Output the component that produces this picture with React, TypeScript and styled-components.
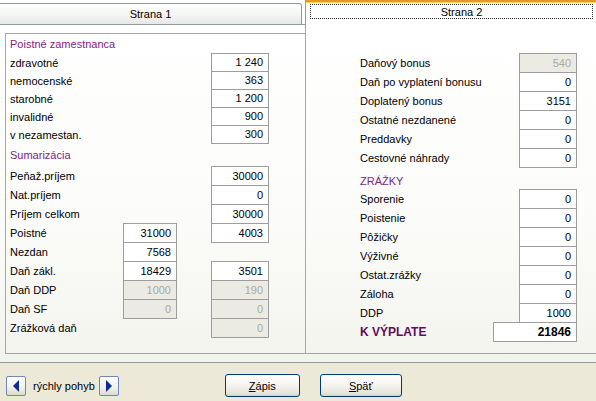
import React from 'react';
import styled, { createGlobalStyle } from 'styled-components';

const GlobalStyle = createGlobalStyle`
  html, body {
    margin: 0;
    padding: 0;
  }
  body {
    background: #ece9d8;
    font-family: "Liberation Sans", Arial, sans-serif;
    font-size: 11px;
    color: #000000;
  }
`;

const Window = styled.div`
  width: 596px;
  height: 401px;
  display: flex;
  flex-direction: column;
  overflow: hidden;
  background: #ece9d8;
`;

const TabStrip = styled.div`
  display: flex;
  align-items: flex-end;
  height: 25px;
  flex-shrink: 0;
  background: #ffffff;
`;

const InactiveTab = styled.div`
  box-sizing: border-box;
  width: 302px;
  height: 22px;
  border: 1px solid #919b9c;
  border-left: none;
  border-top-right-radius: 3px;
  background: linear-gradient(to bottom, #ffffff, #f5f5f3 55%, #e7e7ea);
  display: flex;
  align-items: center;
  justify-content: center;
`;

const TabGap = styled.div`
  width: 3px;
  height: 25px;
  box-sizing: border-box;
  border-bottom: 1px solid #919b9c;
`;

const ActiveTab = styled.div`
  box-sizing: border-box;
  flex: 1;
  height: 25px;
  border-left: 1px solid #919b9c;
  border-top: 2px solid #e8962e;
  box-shadow: inset 0 1px 0 #ffce5a;
  background: #ffffff;
  padding: 2px 3px 0 4px;
`;

const FocusRect = styled.div`
  box-sizing: border-box;
  height: 15px;
  border: 1px dotted #333333;
  padding-left: 20px;
  display: flex;
  align-items: center;
  justify-content: center;
`;

const Page = styled.div`
  box-sizing: border-box;
  height: 338px;
  flex-shrink: 0;
  display: flex;
  align-items: flex-start;
  border-bottom: 1px solid #919b9c;
  background: linear-gradient(to bottom, #ffffff, #fbfbf9 60%, #f3f3ee);
`;

const GroupBox = styled.div`
  box-sizing: border-box;
  width: 300px;
  height: 321px;
  margin: 8px 0 0 5px;
  border: 1px solid #a7a6aa;
  border-right: none;
  padding-left: 4px;
`;

const RightPanel = styled.div`
  box-sizing: border-box;
  flex: 1;
  height: 329px;
  border-left: 1px solid #a7a6aa;
  border-bottom: 1px solid #a7a6aa;
  padding: 28px 0 0 54px;
`;

const SectionTitle = styled.div<{ $h: number; $pad?: number }>`
  height: ${(p) => p.$h}px;
  box-sizing: border-box;
  padding-top: ${(p) => p.$pad ?? 0}px;
  display: flex;
  align-items: center;
  color: #7e1f7e;
`;

const LeftRow = styled.div<{ $h: number }>`
  display: grid;
  grid-template-columns: 113px 54px 34px 58px;
  height: ${(p) => p.$h}px;
  align-items: start;
`;

const RightRow = styled.div<{ $h: number; $box: number }>`
  display: grid;
  grid-template-columns: 1fr ${(p) => p.$box}px;
  width: 217px;
  height: ${(p) => p.$h}px;
  align-items: start;
`;

const Label = styled.div<{ $h: number; $strong?: boolean }>`
  height: ${(p) => p.$h + 1}px;
  display: flex;
  align-items: center;
  white-space: nowrap;
  font-weight: ${(p) => (p.$strong ? 700 : 400)};
  color: ${(p) => (p.$strong ? '#5e0d5e' : '#000000')};
  font-size: ${(p) => (p.$strong ? 12 : 11)}px;
`;

const Field = styled.div<{ $h: number; $disabled?: boolean; $strong?: boolean }>`
  box-sizing: border-box;
  height: ${(p) => p.$h + 1}px;
  border: 1px solid #9d9d9d;
  background: ${(p) => (p.$disabled ? '#ebebe4' : '#ffffff')};
  color: ${(p) => (p.$disabled ? '#aaa99f' : '#000000')};
  font-weight: ${(p) => (p.$strong ? 700 : 400)};
  font-size: ${(p) => (p.$strong ? 12 : 11)}px;
  text-align: right;
  padding-right: 5px;
  line-height: ${(p) => p.$h - 1}px;
  position: relative;
`;

const Footer = styled.div`
  flex: 1;
  display: flex;
  align-items: flex-start;
  padding: 13px 0 0 6px;
`;

const ArrowButton = styled.div`
  box-sizing: border-box;
  width: 20px;
  height: 20px;
  border: 1px solid #6f88b4;
  border-radius: 2px;
  background: linear-gradient(to bottom, #ffffff, #f1f0ea 60%, #dcd9cf);
  display: flex;
  align-items: center;
  justify-content: center;
`;

const NavText = styled.span`
  line-height: 20px;
  margin: 0 4px 0 7px;
  white-space: nowrap;
`;

const PushButton = styled.div<{ $w: number; $ml: number }>`
  box-sizing: border-box;
  width: ${(p) => p.$w}px;
  height: 23px;
  margin: -2px 0 0 ${(p) => p.$ml}px;
  border: 1px solid #003c74;
  border-radius: 3px;
  background: linear-gradient(to bottom, #ffffff, #f4f3ee 50%, #e4e2d8 90%, #d6d0c5);
  box-shadow: inset 0 -1px 0 #d8d2c6;
  display: flex;
  align-items: center;
  justify-content: center;
`;

type Cell = { v: string; off?: boolean } | null;
type LRow = [string, Cell, Cell];

const top: LRow[] = [
  ['zdravotné', null, { v: '1 240' }],
  ['nemocenské', null, { v: '363' }],
  ['starobné', null, { v: '1 200' }],
  ['invalidné', null, { v: '900' }],
  ['v nezamestan.', null, { v: '300' }],
];

const summary: LRow[] = [
  ['Peňaž.príjem', null, { v: '30000' }],
  ['Nat.príjem', null, { v: '0' }],
  ['Príjem celkom', null, { v: '30000' }],
  ['Poistné', { v: '31000' }, { v: '4003' }],
  ['Nezdan', { v: '7568' }, null],
  ['Daň zákl.', { v: '18429' }, { v: '3501' }],
  ['Daň DDP', { v: '1000', off: true }, { v: '190', off: true }],
  ['Daň SF', { v: '0', off: true }, { v: '0', off: true }],
  ['Zrážková daň', null, { v: '0', off: true }],
];

type RRow = { label: string; v: string; off?: boolean; strong?: boolean };

const income: RRow[] = [
  { label: 'Daňový bonus', v: '540', off: true },
  { label: 'Daň po vyplatení bonusu', v: '0' },
  { label: 'Doplatený bonus', v: '3151' },
  { label: 'Ostatné nezdanené', v: '0' },
  { label: 'Preddavky', v: '0' },
  { label: 'Cestovné náhrady', v: '0' },
];

const deductions: RRow[] = [
  { label: 'Sporenie', v: '0' },
  { label: 'Poistenie', v: '0' },
  { label: 'Pôžičky', v: '0' },
  { label: 'Výživné', v: '0' },
  { label: 'Ostat.zrážky', v: '0' },
  { label: 'Záloha', v: '0' },
  { label: 'DDP', v: '1000' },
  { label: 'K VÝPLATE', v: '21846', strong: true },
];

const renderCell = (c: Cell, h: number) =>
  c ? (
    <Field $h={h} $disabled={c.off}>
      {c.v}
    </Field>
  ) : (
    <div />
  );

const LeftRows: React.FC<{ rows: LRow[]; h: number }> = ({ rows, h }) => (
  <>
    {rows.map(([label, mid, right]) => (
      <LeftRow key={label} $h={h}>
        <Label $h={h}>{label}</Label>
        {renderCell(mid, h)}
        <div />
        {renderCell(right, h)}
      </LeftRow>
    ))}
  </>
);

const RightRows: React.FC<{ rows: RRow[] }> = ({ rows }) => (
  <>
    {rows.map((r) => (
      <RightRow key={r.label} $h={19} $box={r.strong ? 84 : 58}>
        <Label $h={19} $strong={r.strong}>
          {r.label}
        </Label>
        <Field $h={19} $disabled={r.off} $strong={r.strong}>
          {r.v}
        </Field>
      </RightRow>
    ))}
  </>
);

const Arrow: React.FC<{ dir: 'left' | 'right' }> = ({ dir }) => (
  <svg width="8" height="12" viewBox="0 0 8 12">
    <polygon
      points={dir === 'left' ? '7,0 7,12 1,6' : '1,0 1,12 7,6'}
      fill="#0c2d8f"
    />
  </svg>
);

export default function App() {
  return (
    <>
      <GlobalStyle />
      <Window>
        <TabStrip>
          <InactiveTab>Strana 1</InactiveTab>
          <TabGap />
          <ActiveTab>
            <FocusRect>Strana 2</FocusRect>
          </ActiveTab>
        </TabStrip>
        <Page>
          <GroupBox>
            <SectionTitle $h={19}>Poistné zamestnanca</SectionTitle>
            <LeftRows rows={top} h={18} />
            <SectionTitle $h={23}>Sumarizácia</SectionTitle>
            <LeftRows rows={summary} h={19} />
          </GroupBox>
          <RightPanel>
            <RightRows rows={income} />
            <SectionTitle $h={22} $pad={6}>
              ZRÁŽKY
            </SectionTitle>
            <RightRows rows={deductions} />
          </RightPanel>
        </Page>
        <Footer>
          <ArrowButton>
            <Arrow dir="left" />
          </ArrowButton>
          <NavText>rýchly pohyb</NavText>
          <ArrowButton>
            <Arrow dir="right" />
          </ArrowButton>
          <PushButton $w={75} $ml={106}>
            <span>
              <u>Z</u>ápis
            </span>
          </PushButton>
          <PushButton $w={82} $ml={20}>
            <span>
              <u>S</u>päť
            </span>
          </PushButton>
        </Footer>
      </Window>
    </>
  );
}
